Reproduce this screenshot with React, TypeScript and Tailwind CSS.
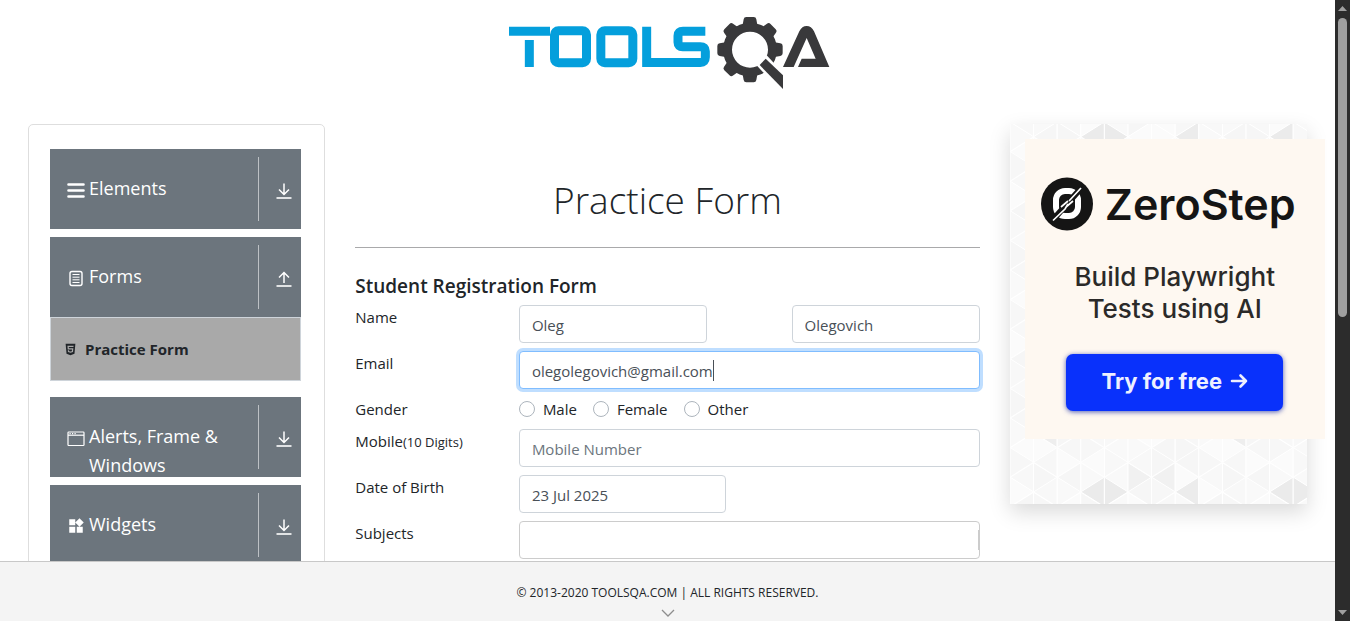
import React from "react";
import { FaHtml5 } from "react-icons/fa";
import { MdWidgets } from "react-icons/md";

const inputClass =
  "block h-[38px] w-full rounded-[4px] border border-[#ced4da] bg-white px-3 pt-[2px] text-[15px] text-[#495057] outline-none placeholder:text-[#6c757d]";

function Logo() {
  return (
    <svg viewBox="0 0 1020 240" className="h-20 w-[340px]" role="img" aria-label="ToolsQA">
      <g fill="none" stroke="#049fdc" strokeWidth="27">
        <path d="M27 63.500H150" />
        <path d="M88 90V171" />
        <rect x="163.500" y="62" width="96" height="96" rx="12" />
        <rect x="302.500" y="62" width="96" height="96" rx="12" />
        <path d="M440 50V157.500H601Q616 157.500 616 142V124Q616 110 601 110H548Q534 110 534 97V77Q534 63.500 549 63.500H616" />
      </g>
      <g fill="#39393b">
        {[0, 45, 90, 180, 225, 270, 315].map((a) => (
          <path key={a} d="M727 50 L731 28 Q732 21 739 21 H761 Q768 21 769 28 L773 50 Z" transform={`rotate(${a} 750 119)`} />
        ))}
        <path fillRule="evenodd" d="M750 38a81 81 0 1 0 0 162a81 81 0 1 0 0-162zm0 27a54 54 0 1 1 0 108a54 54 0 1 1 0-108z" />
      </g>
      <path d="M764 160L800 136L856 196V240H840Z" fill="#fff" />
      <path d="M797 146L849 196V237L779 165Z" fill="#39393b" />
      <path d="M849 171L898 64Q906 48 920 48Q934 48 942 64L988 171H894L905 146H947L920 84L881 171Z" fill="#39393b" />
    </svg>
  );
}

function BarsIcon() {
  return (
    <svg viewBox="0 0 18 18" className="size-[18px]" aria-hidden="true">
      <path d="M1.500 3.500h15M1.500 9.500h15M1.500 15.500h15" stroke="currentColor" strokeWidth="2.600" strokeLinecap="round" />
    </svg>
  );
}

function FormIcon() {
  return (
    <svg viewBox="0 0 18 18" className="size-[18px]" fill="none" stroke="currentColor" aria-hidden="true">
      <rect x="3" y="2.500" width="12" height="14" rx="2" strokeWidth="1.400" />
      <path d="M5.500 5.500h7M5.500 8.200h7M5.500 10.800h7M5.500 13.500h7" strokeWidth="1" />
    </svg>
  );
}

function WindowIcon() {
  return (
    <svg viewBox="0 0 18 18" className="size-[18px]" fill="none" stroke="currentColor" aria-hidden="true">
      <rect x="1" y="3" width="16" height="13.500" rx="0.800" strokeWidth="1.200" />
      <path d="M1 6.200h16" strokeWidth="1.200" />
      <path d="M2.500 4.600h1.200M5 4.600h1.200M7.500 4.600h1.200" strokeWidth="1.200" />
    </svg>
  );
}

function ToggleIcon({ open }: { open?: boolean }) {
  return (
    <svg viewBox="0 0 16 16" className="size-4" fill="none" stroke="currentColor" strokeWidth="1.500" aria-hidden="true">
      {open ? <path d="M8 12V1.500M3 6.500L8 1.500L13 6.500" /> : <path d="M8 0.500V11.500M3 6.500L8 11.500L13 6.500" />}
      <path d="M0.500 15h15" strokeWidth="1.600" />
    </svg>
  );
}

function MenuItem({ icon, label, open }: { icon: React.ReactNode; label: string; open?: boolean }) {
  return (
    <button type="button" aria-expanded={!!open} className="flex h-20 w-full shrink-0 bg-[#6c757d] py-2 pl-[17px] text-left text-white">
      <span className="flex min-w-0 flex-1 gap-1 pt-[17px]">
        <span className="flex h-[31px] shrink-0 items-center">{icon}</span>
        <span className="max-w-[150px] text-[18px] leading-[29px]">{label}</span>
      </span>
      <span className="flex w-[43px] items-center justify-center self-stretch border-l border-[#bdc1c5] pl-2 pt-1">
        <ToggleIcon open={open} />
      </span>
    </button>
  );
}

function Row({ label, htmlFor, children }: { label: React.ReactNode; htmlFor?: string; children: React.ReactNode }) {
  return (
    <div className="mb-2 flex">
      <div className="w-1/4 shrink-0 px-[15px]">
        <label htmlFor={htmlFor} className="whitespace-nowrap">
          {label}
        </label>
      </div>
      {children}
    </div>
  );
}

const DX = 23.6;
const DY = 29.6;
const accents: Record<string, string> = {
  "3-11-L": "#ebebeb",
  "4-11-R": "#ebebeb",
  "7-11-L": "#ececec",
  "5-10-R": "#f1f1f1",
  "6-10-L": "#f1f1f1",
  "11-11-L": "#ebebeb",
  "12-11-R": "#ebebeb",
  "1-9-L": "#eeeeee",
  "9-9-L": "#eeeeee",
  "3--1-L": "#ebebeb",
  "4--1-R": "#ebebeb",
  "7--1-L": "#ececec",
  "11--1-L": "#ebebeb",
};
const shades = ["#f9f9f9", "#f7f7f7", "#fbfbfb", "#f8f8f8", "#f6f6f6"];

function Triangles() {
  const cells: React.ReactNode[] = [];
  const nodeY = (line: number, row: number) => (line % 2 ? 13.1 : 27.5) + (row - (line % 2 ? 0 : 1)) * DY;
  for (let c = 0; c < 13; c++) {
    for (let r = -2; r < 14; r++) {
      const x0 = c * DX;
      const x1 = x0 + DX;
      const yl = nodeY(c, r);
      const yr = nodeY(c + 1, r);
      const apexR = yl + DY / 2;
      const apexL = yr + DY / 2;
      const n = Math.abs((c % 8) * 7 + r * 11 + (c % 8) * r);
      cells.push(
        <path key={`${c}${r}R`} d={`M${x0} ${yl}V${yl + DY}L${x1} ${apexR}Z`} fill={accents[`${c}-${r - 1}-R`] ?? shades[n % 5]} />,
        <path key={`${c}${r}L`} d={`M${x1} ${yr}V${yr + DY}L${x0} ${apexL}Z`} fill={accents[`${c}-${r - 1}-L`] ?? shades[(n + 2) % 5]} />,
      );
    }
  }
  return (
    <svg className="absolute inset-0 size-full" stroke="#ffffff" strokeWidth="1" aria-hidden="true">
      {cells}
    </svg>
  );
}

function ZeroStepMark() {
  return (
    <svg viewBox="0 0 52 54" className="h-[54px] w-[52px] shrink-0" aria-hidden="true">
      <ellipse cx="26" cy="27" rx="26" ry="26.500" fill="#151515" />
      <rect x="15" y="14" width="22" height="25" rx="9" fill="none" stroke="#fff" strokeWidth="6" />
      <path d="M10 45L42 9" stroke="#151515" strokeWidth="6" />
      <path d="M12 43.500L24 32L27 27M25 30L32 24M20 30L27 24M28 24L40 11" fill="none" stroke="#fff" strokeWidth="1.700" />
    </svg>
  );
}

function Ad() {
  return (
    <aside className="relative h-[380px] w-full bg-[#f9f9f9] pl-[15px] pt-[15px] shadow-[0_8px_20px_rgba(0,0,0,0.15)]">
      <Triangles />
      <div className="relative flex h-[300px] w-[300px] flex-col items-center bg-[#fef8f1] pt-[38px] font-['Inter',sans-serif]">
        <div className="flex items-center gap-3 pr-[13px]">
          <ZeroStepMark />
          <span className="text-[43px] font-semibold leading-[54px] text-[#151515]">ZeroStep</span>
        </div>
        <p className="mt-[30px] text-center text-[26px] font-medium leading-8 text-[#2b2a29]">
          Build Playwright
          <br />
          Tests using AI
        </p>
        <a
          href="#try"
          className="mt-[29px] flex h-[57px] w-[217px] items-center justify-center gap-2 rounded-[7px] bg-[#0931fb] pb-[3px] text-[22px] font-bold text-[#eef0ff] shadow-[0_1px_5px_rgba(9,30,160,0.7)]"
        >
          Try for free
          <svg viewBox="0 0 18 18" className="size-[18px]" fill="none" stroke="currentColor" strokeWidth="2.600" strokeLinecap="round" strokeLinejoin="round" aria-hidden="true">
            <path d="M2 9h14M10.500 3.500L16 9L10.500 14.500" />
          </svg>
        </a>
      </div>
    </aside>
  );
}

export default function App() {
  return (
    <div className="flex h-screen overflow-hidden bg-white font-['Open_Sans','Noto_Sans',sans-serif] text-[15px] leading-6 text-[#212529]">
      <div className="flex min-w-0 flex-1 flex-col">
        <main className="min-h-0 flex-1 overflow-hidden">
          <header className="flex h-[124px] justify-center pl-1 pt-[10px]">
            <a href="#home" className="block h-20">
              <Logo />
            </a>
          </header>
          <div className="flex px-[13px]">
            <div className="w-1/4 shrink-0 px-[15px]">
              <nav className="flex min-h-[600px] flex-col gap-2 rounded-[5px] border border-[#dedede] pb-6 pl-[21px] pr-[23px] pt-6">
                <MenuItem icon={<BarsIcon />} label="Elements" />
                <div className="mb-2">
                  <MenuItem icon={<FormIcon />} label="Forms" open />
                  <a href="#practice-form" className="flex h-16 items-center gap-2 border border-[#ced4da] bg-[#a9a9a9] pl-[13px] text-[15px] font-bold">
                    <FaHtml5 className="size-[13px]" />
                    Practice Form
                  </a>
                </div>
                <MenuItem icon={<WindowIcon />} label="Alerts, Frame & Windows" />
                <MenuItem icon={<MdWidgets className="size-[18px]" />} label="Widgets" />
              </nav>
            </div>
            <div className="w-1/2 shrink-0 pt-[46px]">
              <h1 className="text-center text-[37px] font-light leading-[60px]">Practice Form</h1>
              <hr className="mx-[15px] mt-[17px] border-[#a9a9ab]" />
              <h5 className="mb-[7px] mt-[26px] px-[15px] text-[19px] font-semibold leading-6">Student Registration Form</h5>
              <form>
                <Row label="Name" htmlFor="firstName">
                  <div className="w-1/3 px-[15px]">
                    <input id="firstName" className={inputClass} defaultValue="Oleg" />
                  </div>
                  <div className="w-1/12" />
                  <div className="w-1/3 px-[15px]">
                    <input aria-label="Last name" className={inputClass} defaultValue="Olegovich" />
                  </div>
                </Row>
                <Row label="Email" htmlFor="email">
                  <div className="w-3/4 px-[15px]">
                    <div className="relative">
                      <input
                        id="email"
                        type="email"
                        className="block h-[38px] w-full rounded-[4px] border border-[#80bdff] bg-white px-3 pt-[2px] text-[15px] text-[#495057] shadow-[0_0_0_3px_#bfdeff] outline-none"
                        defaultValue="olegolegovich@gmail.com"
                      />
                      <span className="absolute left-[194px] top-[9px] h-[21px] w-px bg-[#495057]" />
                    </div>
                  </div>
                </Row>
                <Row label="Gender">
                  <div className="flex gap-4 px-[15px]">
                    {["Male", "Female", "Other"].map((g) => (
                      <label key={g} className="flex items-center gap-2">
                        <input type="radio" name="gender" className="size-4 appearance-none rounded-full border border-[#adb5bd] bg-white" />
                        {g}
                      </label>
                    ))}
                  </div>
                </Row>
                <Row
                  htmlFor="mobile"
                  label={
                    <>
                      Mobile<small className="text-[13px]">(10 Digits)</small>
                    </>
                  }
                >
                  <div className="w-3/4 px-[15px]">
                    <input id="mobile" className={inputClass} placeholder="Mobile Number" />
                  </div>
                </Row>
                <Row label="Date of Birth" htmlFor="dob">
                  <div className="w-[237px] px-[15px]">
                    <input id="dob" className={inputClass} defaultValue="23 Jul 2025" />
                  </div>
                </Row>
                <Row label="Subjects" htmlFor="subjects">
                  <div className="w-3/4 px-[15px]">
                    <div className="flex h-[38px] items-center rounded-[4px] border border-[#cccccc]">
                      <input id="subjects" className="h-full min-w-0 flex-1 bg-transparent px-3 outline-none" />
                      <span className="h-5 w-px bg-[#cccccc]" />
                    </div>
                  </div>
                </Row>
              </form>
            </div>
            <div className="w-1/4 shrink-0 px-[15px]">
              <Ad />
            </div>
          </div>
        </main>
        <footer className="flex h-[60px] shrink-0 flex-col items-center border-t border-[#c8c8c8] bg-[#f4f4f4] pt-[19px]">
          <span className="text-[12px] leading-6">© 2013-2020 TOOLSQA.COM | ALL RIGHTS RESERVED.</span>
          <svg viewBox="0 0 14 8" className="mt-1 h-2 w-[14px]" fill="none" stroke="#8d8d8d" strokeWidth="1.300" aria-hidden="true">
            <path d="M1 1L7 7L13 1" />
          </svg>
        </footer>
      </div>
      <div className="flex w-[15px] shrink-0 flex-col items-center justify-between bg-[#2c2c2c] py-[6px]" aria-hidden="true">
        <div className="flex h-[311px] flex-col items-center justify-between">
          <svg viewBox="0 0 9 5" className="h-[5px] w-[9px]" fill="#9f9f9f">
            <path d="M0 5L4.500 0L9 5Z" />
          </svg>
          <div className="h-[299px] w-[9px] rounded-full bg-[#9f9f9f]" />
        </div>
        <svg viewBox="0 0 9 5" className="h-[5px] w-[9px]" fill="#9f9f9f">
          <path d="M0 0L4.500 5L9 0Z" />
        </svg>
      </div>
    </div>
  );
}
